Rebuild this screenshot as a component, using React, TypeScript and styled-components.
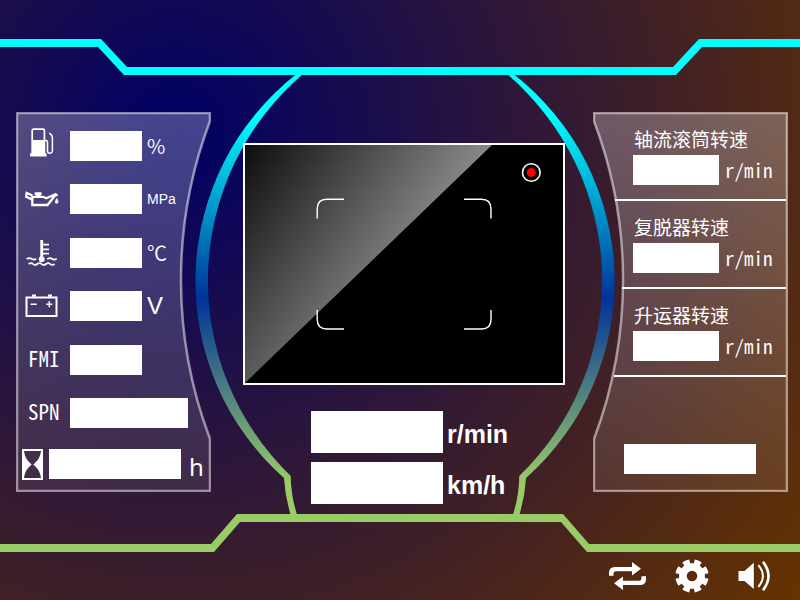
import React from "react";
import styled, { createGlobalStyle } from "styled-components";

const GlobalStyle = createGlobalStyle`
  *, *::before, *::after { box-sizing: border-box; }
  body {
    margin: 0;
    background: #3a1a2c;
    color: #fff;
    font-family: "Noto Sans CJK SC", "Noto Sans", sans-serif;
  }
`;

const Screen = styled.div`
  position: relative;
  isolation: isolate;
  display: flex;
  flex-direction: column;
  min-height: 100vh;
  background: radial-gradient(circle farthest-corner at 22% 22%, #000066, #663300);
`;

const FrameArt = styled.svg`
  position: absolute;
  inset: 0;
  z-index: -1;
  width: 100%;
  height: 100%;
`;

const Main = styled.main`
  flex: 1;
  display: grid;
  grid-template-columns: 195fr 382fr 195fr;
  padding: 112px 12px 48px 16px;
`;

const Panel = styled.section`
  position: relative;
  isolation: isolate;
  display: flex;
  flex-direction: column;
  margin-bottom: 12px;
`;

const PanelArt = styled.svg`
  position: absolute;
  inset: 0;
  z-index: -1;
  width: 100%;
  height: 100%;
`;

const GaugePanel = styled(Panel)`
  gap: 21px;
  padding: 19px 0 13px 6px;
`;

const GaugeList = styled.div`
  flex: 1;
  display: flex;
  flex-direction: column;
  justify-content: space-between;
`;

const GaugeRow = styled.div`
  display: flex;
  align-items: center;
  height: 30px;
`;

const GaugeKey = styled.label<{ $text?: boolean }>`
  flex: none;
  display: flex;
  align-items: center;
  width: 48px;
  padding: ${(p) => (p.$text ? "0 0 4px 6px" : "0 0 0 1px")};
  font-size: 21px;
  line-height: 30px;
  font-feature-settings: "hwid";
`;

const HourKey = styled.label`
  flex: none;
  display: flex;
  width: 27px;
`;

const Icon = styled.svg`
  display: block;
  flex: none;
  fill: none;
  stroke: #fff;
`;

const SolidIcon = styled(Icon)`
  fill: #fff;
  stroke: none;
`;

const Field = styled.input<{ $width: number; $tall?: boolean }>`
  flex: none;
  width: ${(p) => p.$width}px;
  height: ${(p) => (p.$tall ? 42 : 30)}px;
  padding: 0 6px;
  border: 0;
  border-radius: 0;
  background: #fff;
  color: #111;
  font: 20px "Liberation Sans", sans-serif;
`;

type UnitLook = "plain" | "small" | "large" | "round";

const unitLooks: Record<UnitLook, string> = {
  plain: `font: 20px/30px "Noto Sans CJK SC", sans-serif; font-weight: 350;`,
  small: `font: 14px/30px "Liberation Sans", sans-serif;`,
  large: `font: 24px/30px "Liberation Sans", sans-serif;`,
  round: `font: 24px/30px "Noto Sans", sans-serif; padding-top: 6px;`,
};

const Unit = styled.span<{ $look: UnitLook; $gap?: number }>`
  margin-left: ${(p) => p.$gap ?? 5}px;
  ${(p) => unitLooks[p.$look]}
`;

const Center = styled.section`
  display: flex;
  flex-direction: column;
  padding: 31px 28px 0 32px;
`;

const Camera = styled.div`
  position: relative;
  flex: 1;
  min-height: 160px;
  border: 2px solid #fff;
  background: #000;
`;

const CameraArt = styled.svg`
  position: absolute;
  inset: 0;
  width: 100%;
  height: 100%;
`;

const MainReadouts = styled.div`
  display: flex;
  flex-direction: column;
  gap: 9px;
  margin-top: 26px;
  padding-left: 68px;
`;

const MainReadout = styled.label`
  display: flex;
  align-items: center;
  gap: 4px;
  height: 42px;
  font: bold 25px/38px "Liberation Sans", sans-serif;
`;

const MainUnit = styled.span`
  padding-top: 4px;
`;

const SpeedPanel = styled(Panel)`
  padding: 1px 2px 18px 0;
`;

const SpeedSection = styled.div<{ $inset: number }>`
  display: flex;
  flex-direction: column;
  gap: 4px;
  margin-left: ${(p) => p.$inset}px;
  padding: 14px 0 14px ${(p) => 40 - p.$inset}px;
  border-bottom: 2px solid #fff;
`;

const SpeedTitle = styled.label`
  padding-left: 1px;
  font-size: 19px;
  line-height: 24px;
  white-space: nowrap;
`;

const SpeedValue = styled.div`
  display: flex;
  align-items: center;
  gap: 6px;
  font-size: 19px;
  line-height: 30px;
  font-feature-settings: "hwid";
`;

const SpeedExtra = styled.div`
  flex: 1;
  display: flex;
  align-items: flex-end;
  padding-left: 31px;
`;

const Toolbar = styled.footer`
  display: flex;
  justify-content: flex-end;
  align-items: center;
  gap: 29px;
  height: 48px;
  padding-right: 29px;
`;

const ToolButton = styled.button`
  display: flex;
  padding: 0;
  border: 0;
  background: none;
  cursor: pointer;
`;

const FuelIcon = () => (
  <Icon width="36" height="36" viewBox="0 0 36 36" strokeWidth="1.7">
    <rect x="9.2" y="1.2" width="12.2" height="24" rx="1.2" />
    <path d="M9 12h12.500v14H9zM7 26q0-1.500 2-1.500h12.500q2 0 2 1.500v2.500H7z" fill="#fff" stroke="none" />
    <path d="M21 12.500h2q1.500 0 1.500 2V23q0 2.300 2.300 2.300T29.400 23V10q0-3-3.200-4.800" strokeWidth="1.500" />
  </Icon>
);

const OilIcon = () => (
  <Icon width="36" height="36" viewBox="0 0 36 36" strokeWidth="2.300">
    <path d="M9.500 14.500L3.600 12L3.200 15.800L9 18.400" />
    <path d="M9.300 15.800H20l3.200 1.400 10-4.200-8.700 11H9.300z" />
    <path d="M11.700 11.300h6.800v3h-1.200v2h-4.200v-2h-1.400z" fill="#fff" stroke="none" />
    <path d="M31 13h3.200v2.500M33.700 17.500q2.600 4.500 0 4.800t0-4.800z" fill="#fff" strokeWidth="0.8" />
  </Icon>
);

const TemperatureIcon = () => (
  <Icon width="36" height="36" viewBox="0 0 36 36" strokeWidth="1.700">
    <path d="M18.700 5v19" strokeWidth="2.800" />
    <path d="M18.700 9.700H26M18.700 14.300H26M18.700 18.700H26" />
    <circle cx="18.700" cy="24.200" r="2.900" fill="#fff" stroke="none" />
    <path d="M3.700 24.200q2.500-2 4.700-.4t4.800 0M24.200 24.200q2.500-2 4.700-.4t4.800 0M5.700 29q2.300-1.900 4.300 0t4.300 0 4.300 0 4.300 0 4.300 0 4.300 0" />
  </Icon>
);

const BatteryIcon = () => (
  <Icon width="36" height="36" viewBox="0 0 36 36" strokeWidth="2">
    <rect x="3.500" y="9.500" width="30" height="18.500" />
    <path d="M9 7.600h4M25 7.600h4" strokeWidth="2.400" />
    <path d="M7.700 16.200h6M23.300 16.200h6M26.300 13.200v6" strokeWidth="1.500" />
  </Icon>
);

const HourglassIcon = () => (
  <SolidIcon width="21" height="31" viewBox="0 0 21 31">
    <path
      fillRule="evenodd"
      d="M0 0h21v31H0zM2 2C3 9 6 12.500 9.700 15.500C6 18.500 3 22 2 29h17C18 22 15 18.500 11.300 15.500C15 12.500 18 9 19 2z"
    />
  </SolidIcon>
);

const LoopIcon = () => (
  <SolidIcon width="37" height="28" viewBox="0 0 37 28">
    <path d="M0 13.700V11q0-6 6-6H23V0l9 6.800-9 6.700V9.300H7q-2.500 0-2.500 2.200v2.200z" />
    <path d="M37 14.300V17q0 6-6 6H14V28l-9-6.800 9-6.700v4.200H30q2.500 0 2.500-2.200v-2.200z" />
  </SolidIcon>
);

const gearPoint = (radius: number, degrees: number) => {
  const a = (degrees * Math.PI) / 180;
  return `${(17 + radius * Math.cos(a)).toFixed(2)} ${(17 + radius * Math.sin(a)).toFixed(2)}`;
};

const gearOutline =
  Array.from({ length: 8 }, (_, i) => {
    const c = 22.5 + i * 45;
    return `${i ? "L" : "M"}${gearPoint(13, c - 14)}L${gearPoint(16.7, c - 13)}A16.7 16.7 0 0 1 ${gearPoint(16.7, c + 13)}L${gearPoint(13, c + 14)}`;
  }).join("") + "Z";

const GearIcon = () => (
  <SolidIcon width="34" height="34" viewBox="0 0 34 34">
    <path fillRule="evenodd" d={`${gearOutline}M17 11.700a5.300 5.300 0 1 0 0 10.600a5.300 5.300 0 1 0 0-10.600z`} />
  </SolidIcon>
);

const SpeakerIcon = () => (
  <Icon width="33" height="32" viewBox="0 0 33 32">
    <path d="M.5 11H6.500L15.800 2.800V29L6.500 21H.5z" fill="#fff" stroke="none" />
    <path d="M20.300 5.200q9.300 10.800 0 21.600" strokeWidth="2" />
    <path d="M25 1.800q11 14.200 0 28.400" strokeWidth="2.600" />
  </Icon>
);

const ringLeft =
  "M296.500 74A263 263 0 0 0 284 478Q285 497 291 516H297.500Q291 497 290.700 476A272 272 0 0 1 303 74Z";

const Frame = () => (
  <FrameArt viewBox="0 0 800 600" preserveAspectRatio="none" aria-hidden="true">
    <defs>
      <linearGradient id="ring" gradientUnits="userSpaceOnUse" x1="0" y1="115" x2="0" y2="482">
        <stop offset="0" stopColor="#00ffff" />
        <stop offset="0.5" stopColor="#003399" />
        <stop offset="1" stopColor="#99cc66" />
      </linearGradient>
    </defs>
    <path d={ringLeft} fill="url(#ring)" />
    <path d={ringLeft} fill="url(#ring)" transform="translate(810 0) scale(-1 1)" />
    <path
      fill="#00ffff"
      d="M0 39H101L127 67H673L699 39H800V47H702L676 75H124L98 47H0Z"
    />
    <path
      fill="#99cc66"
      d="M0 544H211L237 514H563L589 544H800V552H587L561 522H240L214 552H0Z"
    />
  </FrameArt>
);

const panelOutline = "M1 1H194V9A450 450 0 0 0 194 327V379H1Z";

const PanelShape = ({ mirrored }: { mirrored?: boolean }) => (
  <PanelArt viewBox="0 0 195 380" preserveAspectRatio="none" aria-hidden="true">
    <defs>
      <linearGradient id="glass" x1="0" y1="0" x2="0" y2="1">
        <stop offset="0" stopColor="#fff" stopOpacity="0.27" />
        <stop offset="1" stopColor="#fff" stopOpacity="0.08" />
      </linearGradient>
    </defs>
    <path
      d={panelOutline}
      transform={mirrored ? "translate(195 0) scale(-1 1)" : undefined}
      fill="url(#glass)"
      stroke="#fff"
      strokeOpacity="0.5"
      strokeWidth="2.500"
    />
  </PanelArt>
);

const CameraView = () => (
  <CameraArt viewBox="0 0 318 238" preserveAspectRatio="none" aria-hidden="true">
    <defs>
      <linearGradient id="glare" gradientUnits="userSpaceOnUse" x1="0" y1="0" x2="171" y2="113">
        <stop offset="0" stopColor="#0d0d0d" />
        <stop offset="1" stopColor="#888" />
      </linearGradient>
    </defs>
    <path d="M0 0H247L0 238Z" fill="url(#glare)" />
    <path
      d="M72.200 73.500V64q0-9.700 9.700-9.700H99M219 54.300h17.500q9.500 0 9.500 9.700v9.500M72.200 165v9.500q0 9.500 9.700 9.500H99M219 184h17.500q9.500 0 9.500-9.500V165"
      fill="none"
      stroke="#fff"
      strokeWidth="1.400"
    />
    <circle cx="286.300" cy="27.500" r="8.800" fill="none" stroke="#fff" strokeWidth="1.600" />
    <circle cx="286.300" cy="27.500" r="4.500" fill="#f00" />
  </CameraArt>
);

interface Gauge {
  id: string;
  name: string;
  icon?: React.ReactNode;
  unit?: string;
  look?: UnitLook;
  width: number;
}

const gauges: Gauge[] = [
  { id: "fuel", name: "Fuel", icon: <FuelIcon />, unit: "%", width: 72 },
  { id: "oil", name: "Oil pressure", icon: <OilIcon />, unit: "MPa", look: "small", width: 72 },
  { id: "temp", name: "Coolant temperature", icon: <TemperatureIcon />, unit: "℃", width: 72 },
  { id: "battery", name: "Battery", icon: <BatteryIcon />, unit: "V", look: "large", width: 72 },
  { id: "fmi", name: "FMI", width: 72 },
  { id: "spn", name: "SPN", width: 118 },
];

const mainReadouts = ["r/min", "km/h"];

const speeds = [
  { id: "drum", title: "轴流滚筒转速", inset: 22 },
  { id: "thresher", title: "复脱器转速", inset: 29 },
  { id: "elevator", title: "升运器转速", inset: 21 },
];

export default function App() {
  return (
    <>
      <GlobalStyle />
      <Screen>
        <Frame />
        <Main>
          <GaugePanel>
            <PanelShape />
            <GaugeList>
              {gauges.map((g) => (
                <GaugeRow key={g.id}>
                  <GaugeKey htmlFor={g.id} $text={!g.icon} aria-label={g.name}>
                    {g.icon ?? g.name}
                  </GaugeKey>
                  <Field id={g.id} $width={g.width} />
                  {g.unit && <Unit $look={g.look ?? "plain"}>{g.unit}</Unit>}
                </GaugeRow>
              ))}
            </GaugeList>
            <GaugeRow>
              <HourKey htmlFor="hours" aria-label="Working hours">
                <HourglassIcon />
              </HourKey>
              <Field id="hours" $width={132} />
              <Unit $look="round" $gap={8}>h</Unit>
            </GaugeRow>
          </GaugePanel>

          <Center>
            <Camera>
              <CameraView />
            </Camera>
            <MainReadouts>
              {mainReadouts.map((unit) => (
                <MainReadout key={unit}>
                  <Field $width={132} $tall />
                  <MainUnit>{unit}</MainUnit>
                </MainReadout>
              ))}
            </MainReadouts>
          </Center>

          <SpeedPanel>
            <PanelShape mirrored />
            {speeds.map((s) => (
              <SpeedSection key={s.id} $inset={s.inset}>
                <SpeedTitle htmlFor={s.id}>{s.title}</SpeedTitle>
                <SpeedValue>
                  <Field id={s.id} $width={86} />
                  <span>r/min</span>
                </SpeedValue>
              </SpeedSection>
            ))}
            <SpeedExtra>
              <Field $width={132} aria-label="Status" />
            </SpeedExtra>
          </SpeedPanel>
        </Main>
        <Toolbar>
          <ToolButton type="button" aria-label="Switch page">
            <LoopIcon />
          </ToolButton>
          <ToolButton type="button" aria-label="Settings">
            <GearIcon />
          </ToolButton>
          <ToolButton type="button" aria-label="Sound">
            <SpeakerIcon />
          </ToolButton>
        </Toolbar>
      </Screen>
    </>
  );
}
